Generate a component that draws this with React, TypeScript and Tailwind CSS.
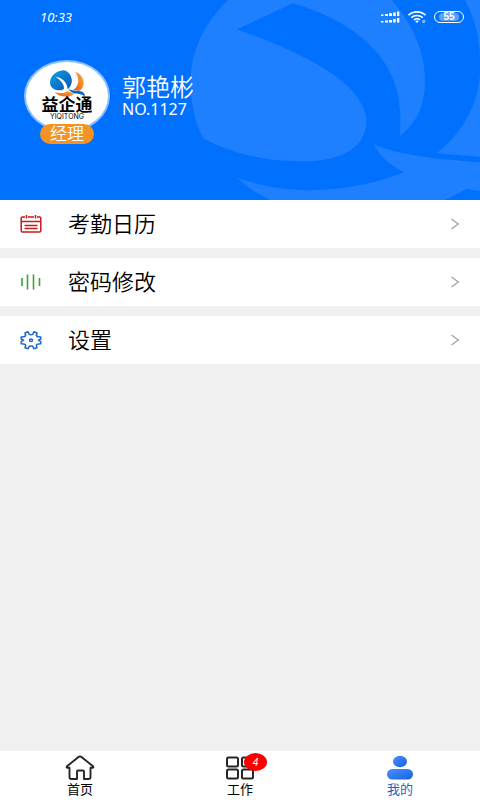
import { useState } from "react";
import type { ReactNode } from "react";

const MENU = [
  { label: "考勤日历", icon: <CalendarIcon /> },
  { label: "密码修改", icon: <BarsIcon /> },
  { label: "设置", icon: <GearIcon /> },
];

export default function App() {
  const [tab, setTab] = useState("me");

  return (
    <div className="flex min-h-screen flex-col bg-[#f0f0f0] font-['Noto_Sans','Noto_Sans_CJK_SC',sans-serif]">
      <header className="relative overflow-hidden bg-[#0070ff] pb-14 text-white">
        <Watermark />
        <div className="relative">
          <StatusBar />
          <Profile />
        </div>
      </header>

      {/* MENU */}
      <main className="flex-1">
        <ul className="flex flex-col gap-2.5">
          {MENU.map((item) => (
            <li key={item.label}>
              <button
                type="button"
                className="flex h-12 w-full items-center bg-white px-5 text-left"
              >
                <span className="w-12">{item.icon}</span>
                <span className="flex-1 pb-1 font-['Noto_Sans_CJK_SC',sans-serif] text-[22px] leading-8 font-[350] text-black">
                  {item.label}
                </span>
                <svg className="h-3 w-2.5" viewBox="0 0 10 12" fill="none" stroke="#a3a3a3" strokeWidth="1.300">
                  <path d="M1.500 1 8.300 6 1.500 11" />
                </svg>
              </button>
            </li>
          ))}
        </ul>
      </main>

      {/* TAB BAR */}
      <nav className="grid grid-cols-3 bg-white">
        <Tab label="首页" active={tab === "home"} onClick={() => setTab("home")}>
          <HomeIcon />
        </Tab>
        <Tab label="工作" active={tab === "work"} badge="4" onClick={() => setTab("work")}>
          <GridIcon />
        </Tab>
        <Tab label="我的" active={tab === "me"} onClick={() => setTab("me")}>
          <UserIcon />
        </Tab>
      </nav>
    </div>
  );
}

function StatusBar() {
  return (
    <div className="flex h-[34px] items-center justify-between pr-4 pl-10">
      <span className="text-[13px] leading-4 italic">10:33</span>
      <div className="flex items-center gap-2">
        <svg className="h-3 w-5" viewBox="0 0 20 12" fill="#fff">
          <path d="M1 3.500h2.500V5H1zM5 3H8V5H5zM9 2.300H12V5H9zM13.200 1.500H15.700V5H13.200zM17 .5H19.300V5H17z" />
          <path d="M1 10h2.500v1.500H1zM5 9.500H8v2H5zM9 9H12v2.500H9zM13.200 8H15.700v3.500H13.200zM17 7H19.300v4.500H17z" />
        </svg>
        <svg className="h-3 w-[18px]" viewBox="0 0 18 12" fill="none" stroke="#fff" strokeWidth="1.600">
          <path d="M.5 4.200C5-.3 13-.3 17.500 4.200M3.300 6.700c3.200-3 8.200-3 11.400 0M6 9c1.800-1.700 4.200-1.700 6 0" />
          <path d="M7.200 10.200a3 3 0 0 1 3.600 0L9 12z" fill="#fff" stroke="none" />
          <path d="M14 11.200h3M14.500 9.800h3" strokeWidth=".8" />
        </svg>
        <span className="flex h-3 w-[30px] items-center justify-center rounded-full border border-white p-px">
          <span className="flex h-2 w-5 items-center justify-center rounded-full bg-white/35 font-['Liberation_Sans',sans-serif] text-[10px] leading-none font-bold">
            55
          </span>
        </span>
      </div>
    </div>
  );
}

function Profile() {
  return (
    <div className="flex gap-3 pt-[26px] pl-6">
      <div className="flex flex-col items-center">
        <div className="flex h-[72px] w-[86px] flex-col items-center rounded-[50%] border-2 border-[#8fc0ff] bg-white pt-2 text-black">
          <Logo />
          <span className="font-['Noto_Sans_CJK_SC',sans-serif] text-[17px] leading-[14px] font-bold">益企通</span>
          <span className="pt-0.5 font-['Inter',sans-serif] text-[7px] leading-[7px]">YIQITONG</span>
        </div>
        <span className="relative -mt-2 rounded-full bg-[#f49324] px-2.5 pb-0.5 font-['Noto_Sans_CJK_SC',sans-serif] text-[17px] leading-[18px] font-[350]">
          经理
        </span>
      </div>
      <div className="pt-3">
        <h1 className="font-['Noto_Sans_CJK_SC',sans-serif] text-2xl leading-7 font-[350]">郭艳彬</h1>
        <p className="pt-px text-base leading-4">NO.1127</p>
      </div>
    </div>
  );
}

type TabProps = {
  label: string;
  active: boolean;
  badge?: string;
  onClick: () => void;
  children: ReactNode;
};

function Tab({ label, active, badge, onClick, children }: TabProps) {
  return (
    <button
      type="button"
      onClick={onClick}
      aria-current={active ? "page" : undefined}
      className={`flex flex-col items-center pt-1 pb-1 ${active ? "text-[#1568c8]" : "text-black"}`}
    >
      <span className="relative">
        {children}
        {badge && (
          <span className="absolute -top-0.5 left-[19px] flex h-[18px] w-[23px] items-center justify-center rounded-[50%] bg-[#fa0000] text-[10px] leading-none text-white italic">
            {badge}
          </span>
        )}
      </span>
      <span className="font-['Noto_Sans_CJK_SC',sans-serif] text-[13px] leading-[15px]">{label}</span>
    </button>
  );
}

function Watermark() {
  return (
    <svg
      className="absolute top-0 right-0 h-[200px] w-[280px] overflow-visible"
      viewBox="0 0 840 600"
      fill="#1f80ff"
      aria-hidden="true"
    >
      <path d="M85 0C0 80-28 170-28 245C-27 310-15 370 10 415C90 460 200 484 310 484C420 484 499 445 499 362C495 255 330 165 112 88L278 10C440 55 560 150 590 270C603 322 602 360 600 408C655 365 675 310 675 240C674 150 635 70 575 0Z" />
      <path d="M795 0C825 60 838 110 840 170V0ZM840 225C832 320 785 400 710 460L840 470Z" />
      <path d="M520 432C590 464 700 477 840 487V573L802 567L735 600H210C170 580 140 560 112 533C270 590 450 580 612 517C570 495 540 470 520 432Z" />
    </svg>
  );
}

function Logo() {
  return (
    <svg className="h-[27px] w-[35px] shrink-0" viewBox="0 0 105 81" aria-hidden="true">
      <defs>
        <linearGradient id="feather" x1="0" y1="0" x2="1" y2="1">
          <stop offset="0" stopColor="#0fa0e4" />
          <stop offset="1" stopColor="#0a55b8" />
        </linearGradient>
        <linearGradient id="flame" x1="1" y1="0" x2="0" y2="1">
          <stop offset="0" stopColor="#f9b233" />
          <stop offset="1" stopColor="#e8551d" />
        </linearGradient>
      </defs>
      <path
        d="M40 1C18 3 0 18 0 38C0 47 5 53 10 56C20 62 36 62 42 56C43 42 31 29 17 20C38 23 52 38 53 58C64 49 68 34 64 23C61 11 52 3 40 1Z"
        fill="url(#feather)"
      />
      <path d="M76 6C98 13 106 36 98 52C95 58 92 61 87 62L70 59C88 47 89 25 76 6Z" fill="url(#flame)" />
      <path d="M14 66C30 72 44 69 54 63L73 72C56 84 27 82 14 66Z" fill="url(#flame)" />
      <path d="M56 58C70 63 90 61 99 67C104 71 105 75 104 80C95 70 82 73 70 69C64 66 59 63 56 58Z" fill="#0a62c4" />
    </svg>
  );
}

function CalendarIcon() {
  return (
    <svg className="h-5 w-[22px]" viewBox="0 0 22 20" fill="none" stroke="#c8191e" strokeWidth="1.500">
      <path d="M5 3H2.500Q1.200 3 1.200 4.300V16.700Q1.200 18 2.500 18H19.500Q20.800 18 20.800 16.700V4.300Q20.800 3 19.500 3H17M8 3h6M6.500 1v3.500M15.500 1v3.500M1.200 7.500h19.600" />
      <path d="M4.500 11.500h13M4.500 14.500h13" strokeWidth="1.300" />
    </svg>
  );
}

function BarsIcon() {
  return (
    <svg className="h-5 w-[22px]" viewBox="0 0 22 20" fill="none" stroke="#35a535" strokeWidth="1.600">
      <path d="M2 6v8M7.500 2.500v15M13.500 2.500v15M19.500 6v8" />
    </svg>
  );
}

function GearIcon() {
  return (
    <svg className="h-5 w-[22px]" viewBox="0 0 22 20" fill="none" stroke="#1c68c8" strokeWidth="1.500" strokeLinejoin="round">
      <path d="M9.300 4.400L8 1.800L5 3L5.700 5.500Q5 6.700 3.800 6.700L1.200 6.900V9L3.600 10.200L1.200 11.600V13.800L3.800 14Q5 14 5.700 15.200L5 17.700L8 18.700L9.300 16.300Q11 15.500 12.700 16.300L14 18.700L17 17.700L16.300 15.200Q17 14 18.200 14L20.800 13.800V11.600L18.400 10.200L20.800 9V6.900L18.200 6.700Q17 6.700 16.300 5.500L17 3L14 1.800L12.700 4.400Q11 5.200 9.300 4.400Z" />
      <ellipse cx="11" cy="10.300" rx="1.500" ry="1.300" />
    </svg>
  );
}

function HomeIcon() {
  return (
    <svg className="h-[26px] w-[30px]" viewBox="0 0 30 26" fill="none" stroke="#262626" strokeWidth="1.900" strokeLinejoin="round" strokeLinecap="round">
      <path d="M4.500 12.800H2.200Q1 12.400 2 11.300L13.500 1.900Q15 1 16.500 1.900L28 11.300Q29 12.400 27.800 12.800H25.500V22Q25.500 24 23.500 24H19V16.500Q19 15.500 18 15.500H13Q12 15.500 12 16.500V24H6.500Q4.500 24 4.500 22Z" />
    </svg>
  );
}

function GridIcon() {
  return (
    <svg className="h-[26px] w-[30px]" viewBox="0 0 30 26" fill="none" stroke="#262626" strokeWidth="2">
      <rect x="2" y="2.500" width="11" height="9" rx="1.500" />
      <rect x="17" y="2.500" width="11" height="9" rx="1.500" />
      <rect x="2" y="14.500" width="11" height="9" rx="1.500" />
      <rect x="17" y="14.500" width="11" height="9" rx="1.500" />
    </svg>
  );
}

function UserIcon() {
  return (
    <svg className="h-[26px] w-[30px]" viewBox="0 0 30 26">
      <defs>
        <linearGradient id="user" x1="0" y1="0" x2="1" y2="1">
          <stop offset="0" stopColor="#4a90ff" />
          <stop offset="1" stopColor="#1561dc" />
        </linearGradient>
      </defs>
      <ellipse cx="15" cy="6.500" rx="7" ry="5.700" fill="url(#user)" />
      <rect x="2" y="14" width="26" height="10.500" rx="5.250" fill="url(#user)" />
    </svg>
  );
}
